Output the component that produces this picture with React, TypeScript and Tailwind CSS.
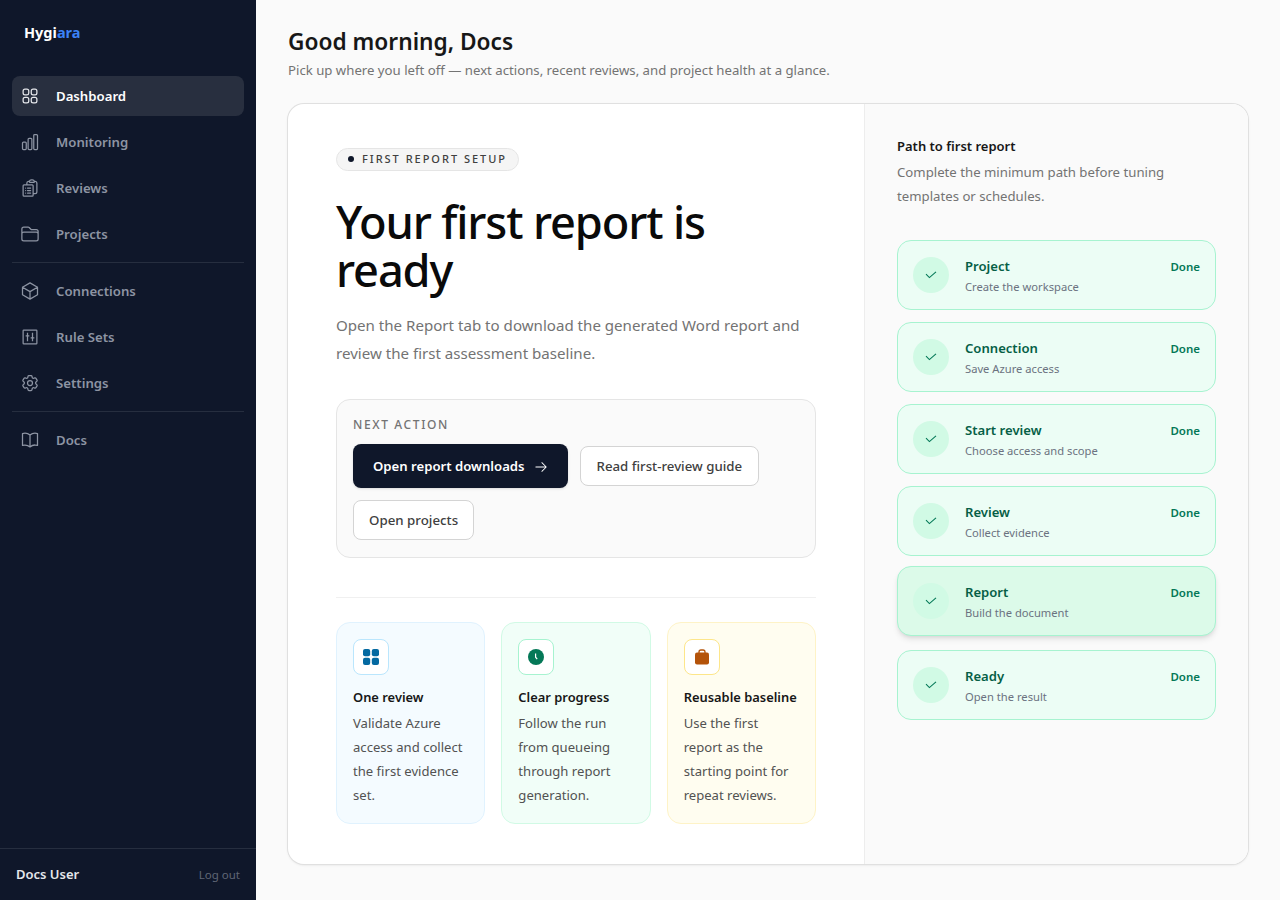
import React from "react";
import {
  HiOutlineSquares2X2, HiOutlineChartBar, HiOutlineClipboardDocumentList, HiOutlineFolder,
  HiOutlineCube, HiOutlineCog6Tooth, HiOutlineBookOpen, HiArrowRight,
} from "react-icons/hi2";

const RuleIcon = ({ className }: { className?: string }) => (
  <svg viewBox="0 0 24 24" fill="none" stroke="currentColor" strokeWidth={1.5} className={className}>
    <rect x="3.75" y="3.75" width="16.5" height="16.5" rx="0.8" />
    <path d="M9 7v10M6.8 10.5h4.4M15 7v10M12.8 13h4.4" />
  </svg>
);

const Nav = ({ icon: Icon, label, active }: { icon: any; label: string; active?: boolean }) => (
  <div className={`flex h-10 items-center gap-[16px] rounded-lg px-2 text-[13.2px] font-semibold ${active ? "bg-[#282f3f] text-white" : "text-[#8d94a3]"}`}>
    <Icon className={`h-[20px] w-[20px] shrink-0 ${active ? "text-[#e5e7eb]" : "text-[#8d94a3]"}`} />
    <span className="pt-[2px]">{label}</span>
  </div>
);

const Step = ({ title, sub, active }: { title: string; sub: string; active?: boolean }) => (
  <div className={`flex h-[70px] items-center rounded-[14px] border border-[#a7f3d0] px-[15px] ${active ? "bg-[#dcfae9] shadow-md" : "bg-[#ecfdf5]"}`}>
    <div className="mr-4 flex h-9 w-9 shrink-0 items-center justify-center rounded-full bg-[#d1fae5]">
      <svg viewBox="0 0 12 8" className="h-2 w-3 text-[#047857]" fill="none" stroke="currentColor" strokeWidth={1.1}>
        <path d="M1 3.2 4.4 6.6 11 0.8" />
      </svg>
    </div>
    <div className="min-w-0 flex-1">
      <div className="text-[13.1px] font-semibold leading-5 text-[#065f46]">{title}</div>
      <div className="mt-[3px] text-[11.2px] leading-4 text-[#6b7280]">{sub}</div>
    </div>
    <div className="mb-[16px] self-center text-[11.5px] font-semibold text-[#047857]">Done</div>
  </div>
);

const Feature = ({ icon, title, text, box, iconBox }: { icon: React.ReactNode; title: string; text: string; box: string; iconBox: string }) => (
  <div className={`rounded-[14px] border px-4 pt-4 ${box}`}>
    <div className={`flex h-9 w-9 items-center justify-center rounded-lg border bg-white ${iconBox}`}>{icon}</div>
    <div className="mt-[12px] whitespace-nowrap text-[12.9px] font-semibold leading-5 text-[#171717]">{title}</div>
    <p className="mt-[4px] text-[13.1px] leading-6 text-[#525252]">{text}</p>
  </div>
);

export default function App() {
  return (
    <div className="flex min-h-[900px] bg-[#fafafa] font-['Noto_Sans','Open_Sans',sans-serif]">
      <aside className="flex h-[900px] w-64 shrink-0 flex-col bg-[#0f172a]">
        <div className="flex h-[66px] items-center px-6 text-[14.5px] font-bold text-white">
          <span>Hygi</span><span className="text-[#3b82f6]">ara</span>
        </div>
        <nav className="mt-[10px] flex flex-1 flex-col gap-[6px] px-3">
          <Nav icon={HiOutlineSquares2X2} label="Dashboard" active />
          <Nav icon={HiOutlineChartBar} label="Monitoring" />
          <Nav icon={HiOutlineClipboardDocumentList} label="Reviews" />
          <Nav icon={HiOutlineFolder} label="Projects" />
          <div className="my-[2px] h-px bg-[#262e3f]" />
          <Nav icon={HiOutlineCube} label="Connections" />
          <Nav icon={RuleIcon} label="Rule Sets" />
          <Nav icon={HiOutlineCog6Tooth} label="Settings" />
          <div className="my-[2px] h-px bg-[#262e3f]" />
          <Nav icon={HiOutlineBookOpen} label="Docs" />
        </nav>
        <div className="flex h-[52px] items-center justify-between border-t border-[#262e3f] px-4">
          <span className="text-[13px] font-semibold text-[#e5e7eb]">Docs User</span>
          <span className="text-[11.5px] text-[#5f6675]">Log out</span>
        </div>
      </aside>
      <main className="min-w-0 flex-1 px-8 pt-[25px]">
        <h1 className="text-[22.7px] font-semibold leading-[34px] text-[#171717]">Good morning, Docs</h1>
        <p className="mt-[1px] text-[13.2px] leading-5 text-[#737373]">Pick up where you left off — next actions, recent reviews, and project health at a glance.</p>
        <div className="mt-[24px] flex h-[760px] overflow-hidden rounded-2xl bg-white shadow-sm ring-1 ring-[#e0e0e0]">
          <section className="w-[576px] shrink-0 px-12 pt-[40px]">
            <div className="inline-flex h-[23px] items-center gap-2 rounded-full border border-[#e5e5e5] bg-[#f5f5f5] px-[11px] text-[11px] font-medium tracking-[0.18em] text-[#404040]">
              <span className="h-[6px] w-[6px] rounded-full bg-[#0f172a]" />FIRST REPORT SETUP
            </div>
            <h2 className="mt-[27px] text-[45.2px] font-medium leading-[48px] tracking-[-0.025em] text-[#0a0a0a]">Your first report is ready</h2>
            <p className="mt-[17px] text-[15.1px] leading-7 text-[#737373]">Open the Report tab to download the generated Word report and review the first assessment baseline.</p>
            <div className="mt-[32px] rounded-[14px] border border-[#e5e5e5] bg-[#fafafa] px-4 pb-[17px] pt-4">
              <div className="text-[12px] font-medium leading-[18px] tracking-[0.135em] text-[#737373]">NEXT ACTION</div>
              <div className="mt-[10px] flex flex-wrap items-center gap-3">
                <button className="flex h-11 items-center gap-[9px] rounded-lg bg-[#0f172a] px-5 pt-[2px] text-[13.15px] font-semibold text-white shadow-sm">Open report downloads <HiArrowRight className="h-[14px] w-[14px]" /></button>
                <button className="h-10 rounded-lg border border-[#d4d4d4] bg-white px-4 pt-[2px] text-[13.25px] font-medium text-[#404040]">Read first-review guide</button>
                <button className="h-10 rounded-lg border border-[#d4d4d4] bg-white px-[15px] pt-[2px] text-[13.3px] font-medium text-[#404040]">Open projects</button>
              </div>
            </div>
            <div className="mt-[39px] h-px bg-[#f0f0f0]" />
            <div className="mt-6 grid h-[202px] grid-cols-3 gap-4">
              <Feature box="border-[#e0f2fe] bg-[#f4fbff]" iconBox="border-[#bae6fd]" icon={
                <svg viewBox="0 0 16 16" className="h-4 w-4 text-[#0369a1]" fill="currentColor"><rect x="0" y="0" width="7.2" height="7.2" rx="2" /><rect x="8.8" y="0" width="7.2" height="7.2" rx="2" /><rect x="0" y="8.8" width="7.2" height="7.2" rx="2" /><rect x="8.8" y="8.8" width="7.2" height="7.2" rx="2" /></svg>
              } title="One review" text="Validate Azure access and collect the first evidence set." />
              <Feature box="border-[#d1fae5] bg-[#f1fef8]" iconBox="border-[#a7f3d0]" icon={
                <svg viewBox="0 0 16 16" className="h-4 w-4 text-[#047857]"><circle cx="8" cy="8" r="8" fill="currentColor" /><path d="M7.6 4.6v3.6l1.6 1.9" fill="none" stroke="#fff" strokeWidth="1.2" /></svg>
              } title="Clear progress" text="Follow the run from queueing through report generation." />
              <Feature box="border-[#fef3c7] bg-[#fffdf0]" iconBox="border-[#fde68a]" icon={
                <svg viewBox="0 0 16 16" className="h-4 w-4 text-[#b45309]"><path d="M5 4.5V3a2 2 0 0 1 2-2h2a2 2 0 0 1 2 2v1.5" fill="none" stroke="currentColor" strokeWidth="1.3" /><rect x="1" y="3.6" width="14" height="12" rx="2" fill="currentColor" /></svg>
              } title="Reusable baseline" text="Use the first report as the starting point for repeat reviews." />
            </div>
          </section>
          <section className="flex-1 border-l border-[#ededed] bg-[#fafafa] px-8 pt-[31px]">
            <div className="mt-px text-[13px] font-semibold leading-5 text-[#171717]">Path to first report</div>
            <p className="mt-[4px] text-[13.2px] leading-6 text-[#737373]">Complete the minimum path before tuning templates or schedules.</p>
            <div className="mt-[32px] flex flex-col gap-3">
              <Step title="Project" sub="Create the workspace" />
              <Step title="Connection" sub="Save Azure access" />
              <Step title="Start review" sub="Choose access and scope" />
              <Step title="Review" sub="Collect evidence" />
              <div className="mb-[2px] mt-[-2px]"><Step title="Report" sub="Build the document" active /></div>
              <Step title="Ready" sub="Open the result" />
            </div>
          </section>
        </div>
      </main>
    </div>
  );
}
